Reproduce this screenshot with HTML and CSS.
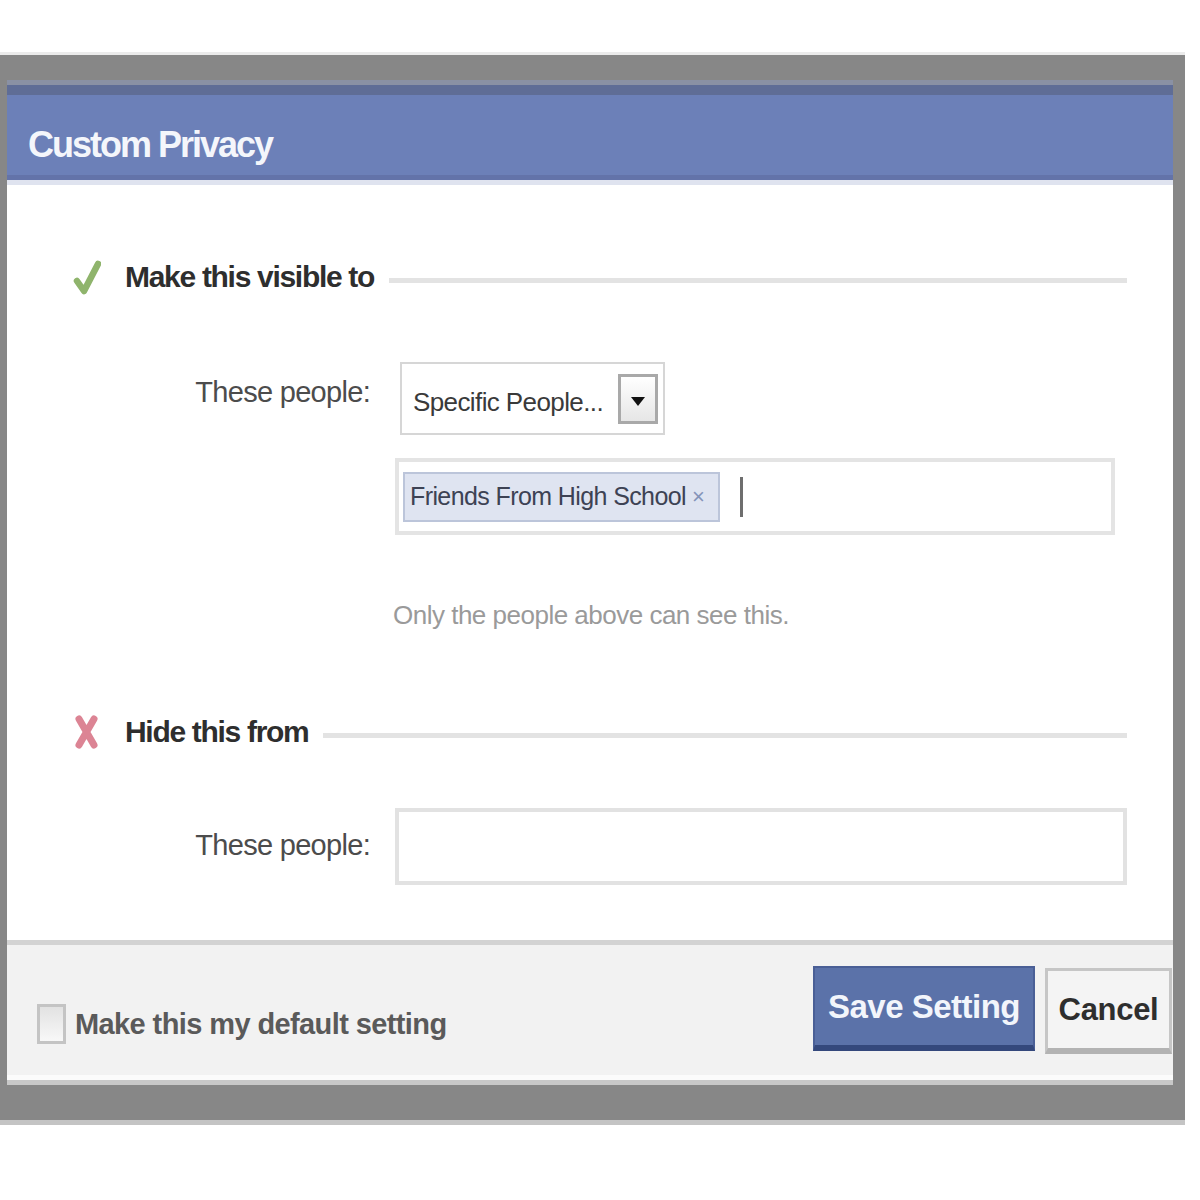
FILE: index.html
```html
<!DOCTYPE html>
<html lang="en">
<head>
  <meta charset="UTF-8" />
  <title>Custom Privacy</title>
  <link rel="stylesheet" href="styles.css">
</head>
<body>

<div class="frame">
  <div class="dialog">
    <div class="dialog-header">
      <h1>Custom Privacy</h1>
    </div>

    <div class="dialog-body">
      <!-- Visible to -->
      <div class="section-head">
        <svg class="icon" width="28" height="36" viewBox="0 0 28 36">
          <path d="M4 22 L11 32 L25 5" fill="none" stroke="#8fb46c" stroke-width="6.5" stroke-linecap="round" stroke-linejoin="round"/>
        </svg>
        <h2>Make this visible to</h2>
        <span class="rule"></span>
      </div>

      <div class="field-row first">
        <label class="field-label">These people:</label>
        <div class="field">
          <div class="select-box">
            <span class="select-text">Specific People...</span>
            <span class="select-arrow"><span class="triangle"></span></span>
          </div>
          <div class="token-input">
            <span class="token">Friends From High School <span class="token-x">×</span></span>
            <span class="caret"></span>
          </div>
          <p class="note">Only the people above can see this.</p>
        </div>
      </div>

      <!-- Hide from -->
      <div class="section-head hide">
        <svg class="icon" width="28" height="40" viewBox="0 0 28 40">
          <path d="M6 7 L21 33 M21 7 L6 33" fill="none" stroke="#dc8494" stroke-width="7" stroke-linecap="round"/>
        </svg>
        <h2>Hide this from</h2>
        <span class="rule"></span>
      </div>

      <div class="field-row second">
        <label class="field-label">These people:</label>
        <div class="field">
          <div class="text-input"></div>
        </div>
      </div>
    </div>

    <div class="dialog-footer">
      <label class="default-check">
        <span class="checkbox"></span>
        Make this my default setting
      </label>
      <div class="buttons">
        <button class="btn btn-save">Save Setting</button>
        <button class="btn btn-cancel">Cancel</button>
      </div>
    </div>
  </div>
</div>

</body>
</html>
```

FILE: styles.css
```css
* {
  margin: 0;
  padding: 0;
  box-sizing: border-box;
  font-family: 'Liberation Sans', Arial, sans-serif;
}

body {
  background: #ffffff;
}

/* grey lightbox frame */
.frame {
  margin-top: 52px;
  width: 1185px;
  background: #878787;
  border-top: 3px solid #ebebeb;
  border-bottom: 5px solid #c4c4c4;
  padding: 25px 12px 35px 7px;
}

.dialog {
  background: #ffffff;
  border-top: 5px solid #8a91a4;
  border-bottom: 5px solid #c8c8c8;
}

.dialog-header {
  height: 95px;
  background: #6c80b8;
  border-top: 10px solid #5f6d96;
  border-bottom: 5px solid #6373a9;
  padding: 20px 0 0 21px;
}

.dialog-header h1 {
  color: #f4f6fb;
  font-size: 36px;
  letter-spacing: -2px;
  line-height: 60px;
  font-weight: bold;
}

.dialog-body {
  border-top: 5px solid #dfe3ef;
  padding: 72px 46px 55px 66px;
}

/* section headings with a rule */
.section-head {
  display: flex;
  align-items: center;
  height: 40px;
}

.section-head.hide {
  margin-top: 77px;
}

.section-head .icon {
  width: 28px;
  margin-right: 24px;
  flex-shrink: 0;
}

.section-head h2 {
  font-size: 30px;
  letter-spacing: -1.3px;
  color: #2e2e2e;
  font-weight: bold;
  line-height: 40px;
}

.section-head .rule {
  flex: 1;
  height: 5px;
  background: #e3e3e3;
  margin-left: 15px;
  margin-top: 6px;
}

/* label + field rows */
.field-row {
  display: grid;
  grid-template-columns: 297px 1fr;
  column-gap: 25px;
}

.field-row.first {
  margin-top: 65px;
}

.field-row.second {
  margin-top: 56px;
}

.field-label {
  text-align: right;
  font-size: 29px;
  letter-spacing: -0.7px;
  line-height: 40px;
  color: #4c4c4c;
  margin-top: 10px;
}

.field-row.second .field-label {
  margin-top: 17px;
}

.select-box {
  width: 265px;
  height: 73px;
  margin-left: 5px;
  border: 2px solid #d6d6d6;
  display: flex;
  align-items: center;
  justify-content: space-between;
  padding: 0 5px 0 11px;
}

.select-text {
  font-size: 26px;
  letter-spacing: -0.6px;
  color: #3a3a3a;
  margin-top: 8px;
}

.select-arrow {
  width: 40px;
  height: 50px;
  border: 3px solid #a9a9a9;
  background: linear-gradient(#ffffff, #e6e6e6);
  display: flex;
  align-items: center;
  justify-content: center;
}

.triangle {
  width: 0;
  height: 0;
  border-left: 7px solid transparent;
  border-right: 7px solid transparent;
  border-top: 9px solid #111111;
  margin-top: 6px;
}

.token-input {
  width: 720px;
  height: 77px;
  margin-top: 23px;
  border: 4px solid #e4e4e4;
  display: flex;
  align-items: center;
  padding: 0 4px;
}

.token {
  height: 50px;
  background: #dfe4f1;
  border: 2px solid #bcc5da;
  padding: 0 14px 0 5px;
  display: flex;
  align-items: center;
  font-size: 25px;
  letter-spacing: -0.6px;
  color: #3d4254;
}

.token-x {
  color: #8493b9;
  font-size: 22px;
  margin-left: 6px;
}

.caret {
  width: 3px;
  height: 40px;
  background: #6e6e6e;
  margin-left: 20px;
}

.note {
  margin-top: 60px;
  margin-left: -2px;
  font-size: 26px;
  letter-spacing: -0.5px;
  line-height: 40px;
  color: #9a9a9a;
}

.text-input {
  height: 77px;
  border: 4px solid #e2e2e2;
}

/* footer */
.dialog-footer {
  height: 140px;
  background: #f2f2f2;
  border-top: 5px solid #d3d3d3;
  border-bottom: 5px solid #fbfbfb;
  display: flex;
  align-items: center;
  justify-content: space-between;
  padding: 0 1px 0 30px;
}

.default-check {
  display: flex;
  align-items: center;
  font-size: 29px;
  font-weight: bold;
  letter-spacing: -0.6px;
  color: #5a5a5a;
  margin-top: 28px;
}

.checkbox {
  width: 29px;
  height: 40px;
  border: 3px solid #c4c4c4;
  background: linear-gradient(#e2e2e2, #f8f8f8);
  margin-right: 9px;
}

.buttons {
  display: flex;
  gap: 10px;
}

.btn {
  height: 85px;
  font-weight: bold;
  cursor: pointer;
}

.btn-save {
  width: 222px;
  background: #5b72a9;
  border: 2px solid #4a5f96;
  border-bottom: 6px solid #34487c;
  color: #f2f5fb;
  font-size: 33px;
  letter-spacing: -0.5px;
}

.btn-cancel {
  width: 127px;
  height: 86px;
  margin-top: 2px;
  background: #f4f4f4;
  border: 3px solid #c6c6c6;
  border-bottom: 6px solid #b3b3b3;
  color: #2e2e2e;
  font-size: 31px;
  letter-spacing: -0.3px;
}
```
